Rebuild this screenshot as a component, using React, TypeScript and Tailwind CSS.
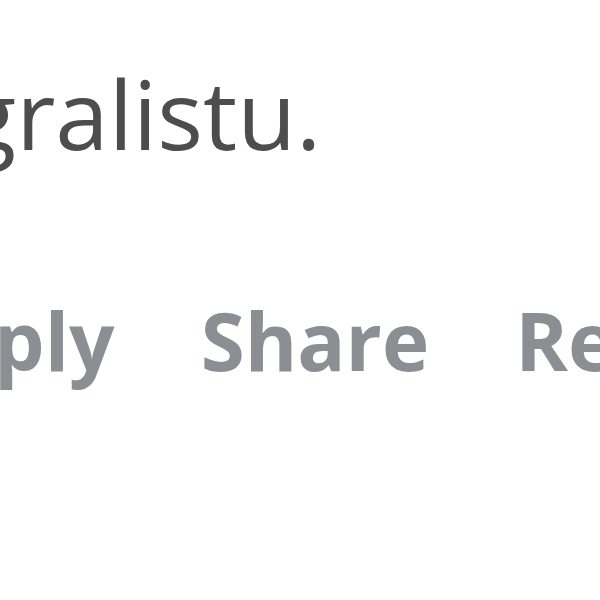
export default function App() {
  const actions = ["Reply", "Share", "Report"];

  return (
    <div className="h-[600px] w-[600px] overflow-hidden bg-white font-['Open_Sans',sans-serif]">
      <p className="ml-[-36px] mt-[48px] whitespace-nowrap text-[96px] leading-[130px] text-[#4d4d4d]">
        gralistu.
      </p>
      <div className="ml-[-106px] mt-[112px] flex gap-[86px] whitespace-nowrap text-[80px] font-bold leading-[100px] text-[#8b8f94]">
        {actions.map((a) => (
          <span key={a}>{a}</span>
        ))}
      </div>
    </div>
  );
}
